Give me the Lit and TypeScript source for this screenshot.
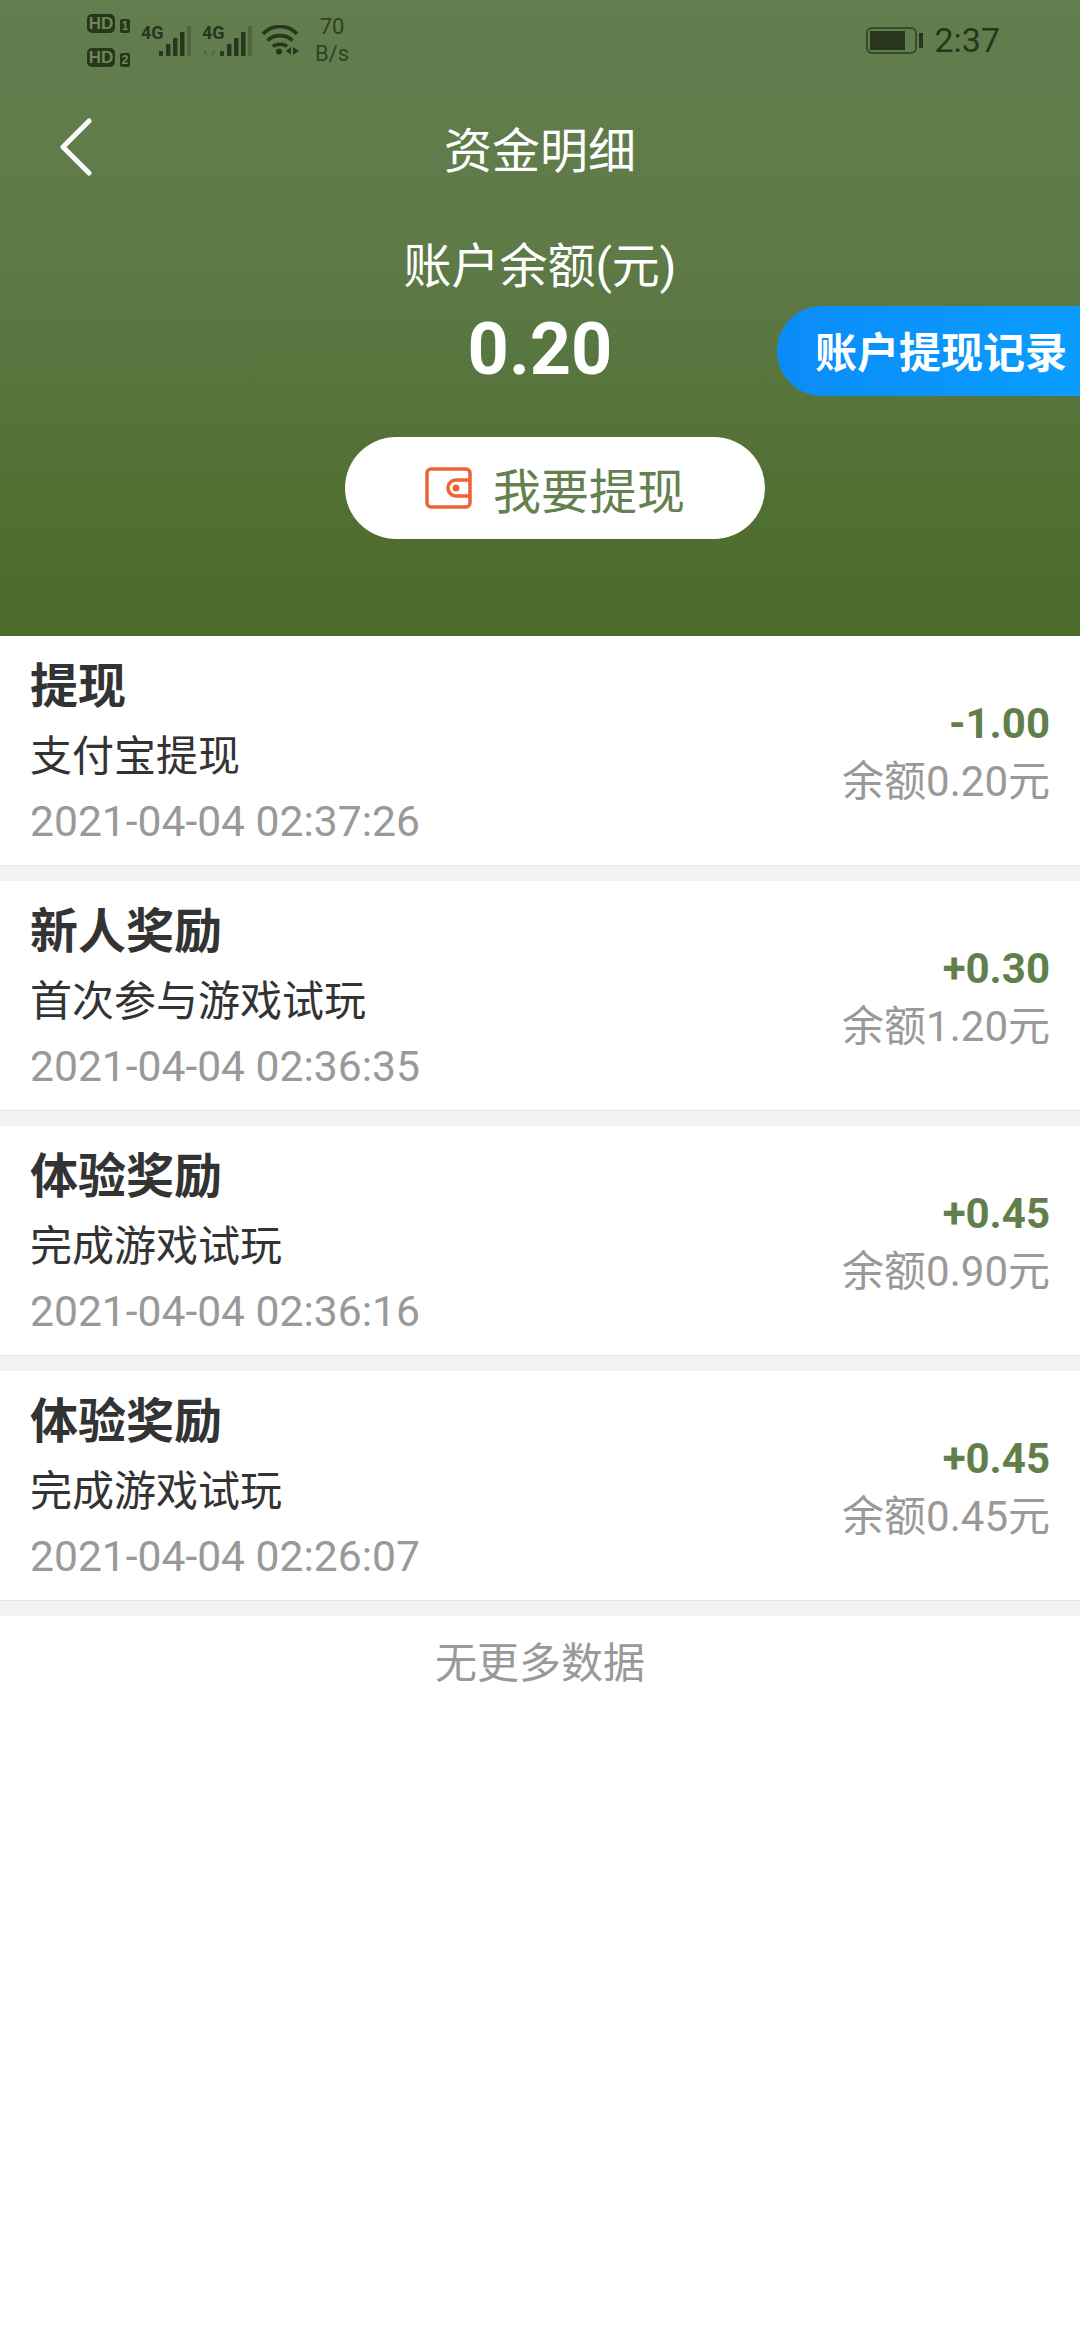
import { LitElement, html, css, svg } from 'lit';
import { customElement } from 'lit/decorators.js';

interface Entry {
  title: string;
  desc: string;
  time: string;
  amount: string;
  balance: string;
}

const ENTRIES: Entry[] = [
  { title: '提现', desc: '支付宝提现', time: '2021-04-04 02:37:26', amount: '-1.00', balance: '余额0.20元' },
  { title: '新人奖励', desc: '首次参与游戏试玩', time: '2021-04-04 02:36:35', amount: '+0.30', balance: '余额1.20元' },
  { title: '体验奖励', desc: '完成游戏试玩', time: '2021-04-04 02:36:16', amount: '+0.45', balance: '余额0.90元' },
  { title: '体验奖励', desc: '完成游戏试玩', time: '2021-04-04 02:26:07', amount: '+0.45', balance: '余额0.45元' },
];

const INK = '#27361c';

// 4G label with five bars, the last one dimmed; the second sim also has data arrows
const signal = (arrows: boolean) => html`
  <svg class="signal" width="51" height="37" viewBox="0 -6 51 37">
    <text x="0" y="14" class="net">4G</text>
    ${arrows
      ? svg`<path d="M5 21v10l-4-5h4zM10 21v10l4-5h-4z" fill="${INK}" fill-opacity=".3"/>`
      : ''}
    <rect x="18" y="26" width="4" height="5" rx="1" fill="${INK}" />
    <rect x="25" y="19" width="4.5" height="12" rx="1" fill="${INK}" />
    <rect x="32" y="13" width="4.5" height="18" rx="1" fill="${INK}" />
    <rect x="39" y="7" width="4.5" height="24" rx="1" fill="${INK}" />
    <rect x="46" y="1" width="4" height="30" fill="${INK}" fill-opacity=".3" />
  </svg>
`;

@customElement('app-root')
export class AppRoot extends LitElement {
  static styles = css`
    :host {
      display: block;
      width: 1080px;
      height: 2340px;
      background: #fff;
      font-family: Roboto, 'Noto Sans CJK SC', sans-serif;
      overflow: hidden;
    }

    .header {
      position: relative;
      height: 636px;
      display: flex;
      flex-direction: column;
      background: linear-gradient(#627e4f 0, #5d7a47 40%, #4a6a28 100%);
      color: #fff;
    }

    /* status bar */
    .status {
      height: 80px;
      flex: none;
      display: flex;
      align-items: center;
      padding: 0 80px 0 87px;
      color: #27361c;
    }
    .hd {
      display: grid;
      grid-template-columns: 28px 10px;
      column-gap: 5px;
      row-gap: 15px;
      align-items: end;
      margin-right: 11px;
    }
    .hd b {
      height: 19px;
      border-radius: 5px;
      background: #27361c;
      color: #6a8a55;
      font: 700 17px/19px 'Liberation Sans', sans-serif;
      text-align: center;
    }
    .hd i {
      height: 14px;
      border-radius: 2px;
      background: #27361c;
      color: #6a8a55;
      font: 700 12px/14px 'Liberation Sans', sans-serif;
      text-align: center;
    }
    .signal {
      margin: -6px 10px 0 0;
      flex: none;
    }
    .net {
      font: 700 18px 'Roboto', sans-serif;
      fill: #27361c;
    }
    .wifi {
      margin: 0 12px 0 -2px;
      flex: none;
    }
    .speed {
      width: 40px;
      text-align: center;
      font-size: 22px;
      line-height: 27px;
      color: #2f4224;
    }
    .right {
      margin-left: auto;
      display: flex;
      align-items: center;
      gap: 10px;
      color: #27361c;
    }
    .time {
      font-size: 34px;
      line-height: 40px;
    }

    /* nav */
    .nav {
      height: 134px;
      flex: none;
      display: grid;
      grid-template-columns: 1fr auto 1fr;
      align-items: center;
      font-size: 48px;
    }
    .back {
      margin-left: 58px;
      display: block;
    }

    .label {
      font-size: 48px;
      line-height: 70px;
      text-align: center;
      margin-top: 18px;
    }
    .total {
      font-size: 72px;
      font-weight: 700;
      line-height: 90px;
      text-align: center;
      margin-top: 3px;
    }
    .withdraw {
      align-self: flex-start;
      margin: 42px 0 0 345px;
      width: 420px;
      height: 102px;
      border-radius: 51px;
      background: #fff;
      color: #64804f;
      font-size: 48px;
      display: flex;
      align-items: center;
      justify-content: center;
      gap: 21px;
    }

    /* floating tab on the right edge */
    .records {
      position: absolute;
      left: 777px;
      right: 0;
      top: 306px;
      height: 90px;
      border-radius: 45px 0 0 45px;
      background: linear-gradient(90deg, #0a8cf8, #0a9dff);
      color: #fff;
      font-size: 42px;
      font-weight: 700;
      display: flex;
      align-items: center;
      padding: 0 0 3px 38px;
      box-sizing: border-box;
    }

    /* list */
    .row {
      height: 230px;
      box-sizing: border-box;
      display: flex;
      align-items: center;
      justify-content: space-between;
      padding: 0 30px;
      border-bottom: 1px solid #e6e6e6;
    }
    .gap {
      height: 15px;
      background: #f2f2f2;
    }
    .info {
      display: flex;
      flex-direction: column;
      gap: 4px;
    }
    .title {
      font-size: 48px;
      font-weight: 700;
      line-height: 66px;
      color: #333;
    }
    .desc {
      font-size: 42px;
      line-height: 66px;
      color: #333;
    }
    .stamp {
      font-size: 42.6px;
      line-height: 54px;
      color: #999;
    }
    .money {
      display: flex;
      flex-direction: column;
      align-items: flex-end;
      gap: 6px;
      padding-top: 4px;
    }
    .amount {
      font-size: 42px;
      font-weight: 700;
      line-height: 52px;
      color: #617f4b;
    }
    .balance {
      font-size: 42px;
      line-height: 52px;
      color: #999;
    }
    .end {
      padding-top: 23px;
      font-size: 42px;
      line-height: 50px;
      text-align: center;
      color: #999;
    }
  `;

  render() {
    return html`
      <div class="header">
        <div class="status">
          <div class="hd">
            <b>HD</b><i>1</i>
            <b>HD</b><i>2</i>
          </div>
          ${signal(false)} ${signal(true)}
          <svg class="wifi" width="39" height="30" viewBox="0 0 39 30">
            <path d="M2 9C11 -1 27 -1 36 9M6.500 15.500C13 9 25 9 31.500 15.500M12 21.500C15 18.500 23 18.500 26 21.500" fill="none" stroke="#27361c" stroke-width="3.6" />
            <circle cx="18" cy="26.500" r="3" fill="#27361c" />
            <path d="M30 22v8l-5-4zM32 22v8l6-4z" fill="#27361c" />
          </svg>
          <div class="speed">70<br />B/s</div>
          <div class="right">
            <svg width="58" height="27" viewBox="0 0 58 27">
              <rect x="1" y="1" width="49" height="25" rx="5" fill="none" stroke="#27361c" stroke-opacity=".7" stroke-width="2" />
              <rect x="4" y="4" width="35" height="19" fill="#27361c" />
              <rect x="53" y="6" width="4" height="15" fill="#27361c" />
            </svg>
            <span class="time">2:37</span>
          </div>
        </div>

        <div class="nav">
          <svg class="back" width="36" height="58" viewBox="0 0 36 58">
            <path d="M31 3L5 29l26 26" fill="none" stroke="#fff" stroke-width="5" stroke-linecap="round" stroke-linejoin="round" />
          </svg>
          <span>资金明细</span>
        </div>

        <div class="label">账户余额(元)</div>
        <div class="total">0.20</div>

        <div class="withdraw">
          <svg width="47" height="42" viewBox="0 0 47 42">
            <path d="M6 2h35a4 4 0 0 1 4 4v30a4 4 0 0 1-4 4H6a4 4 0 0 1-4-4V6a4 4 0 0 1 4-4z" fill="none" stroke="#f0623a" stroke-width="3.500" />
            <path d="M45 13H31a8 8 0 0 0 0 16h14" fill="none" stroke="#f0623a" stroke-width="3.500" />
            <circle cx="31" cy="21" r="3.500" fill="#f0623a" />
          </svg>
          <span>我要提现</span>
        </div>

        <div class="records">账户提现记录</div>
      </div>

      ${ENTRIES.map(
        (e) => html`
          <div class="row">
            <div class="info">
              <div class="title">${e.title}</div>
              <div class="desc">${e.desc}</div>
              <div class="stamp">${e.time}</div>
            </div>
            <div class="money">
              <div class="amount">${e.amount}</div>
              <div class="balance">${e.balance}</div>
            </div>
          </div>
          <div class="gap"></div>
        `
      )}
      <div class="end">无更多数据</div>
    `;
  }
}
